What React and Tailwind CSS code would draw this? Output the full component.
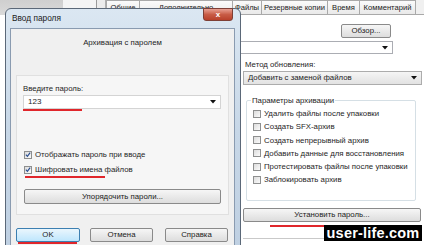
import React from "react";

const Check = ({ checked }) => (
  <span className="w-[8px] h-[8px] border border-[#8e8f8f] bg-gradient-to-br from-[#dcdcdc] to-[#fbfbfb] flex items-center justify-center shrink-0">
    {checked && (
      <svg width="7" height="7" viewBox="0 0 7 7">
        <path d="M1 3.6 L2.8 5.6 L6 1.2" fill="none" stroke="#2b4f8f" strokeWidth="1.4" />
      </svg>
    )}
  </span>
);

const Arrow = () => (
  <svg width="6" height="4" viewBox="0 0 6 4" className="shrink-0">
    <path d="M0 0 H6 L3 3.5 Z" fill="#111" />
  </svg>
);

const WinButton = ({ label, className = "", primary = false }) => (
  <div
    className={`h-[14px] rounded-[2px] border flex items-center justify-center text-[#222] ${
      primary
        ? "border-[#3c7fb1] bg-gradient-to-b from-[#eaf6fd] to-[#bee6fd]"
        : "border-[#8a8a8a] bg-gradient-to-b from-[#f6f6f6] to-[#dddddd]"
    } ${className}`}
  >
    {label}
  </div>
);

const tabs = [
  { label: "Общие", w: "w-[34px]" },
  { label: "Дополнительно", w: "w-[94px]" },
  { label: "Файлы", w: "w-[30px]" },
  { label: "Резервные копии", w: "w-[67px]" },
  { label: "Время", w: "w-[33px]" },
  { label: "Комментарий", w: "w-[57px]" },
];

const options = [
  "Удалить файлы после упаковки",
  "Создать SFX-архив",
  "Создать непрерывный архив",
  "Добавить данные для восстановления",
  "Протестировать файлы после упаковки",
  "Заблокировать архив",
];

const BackWindow = () => (
  <div className="flex flex-col h-full">
    {/* tab strip */}
    <div className="flex h-[15px] shrink-0">
      <div className="w-[63px] bg-gradient-to-b from-[#cfcfcf] to-[#dadada]" />
      <div className="w-[34px] bg-[#f4f4f4] border-r border-[#9a9a9a]" />
      <div className="w-[9px] bg-[#ececec] border-r border-[#b0b0b0]" />
      <div className="flex items-end bg-[#f0f0f0] border-b border-[#a9a9a9]">
        {tabs.map((t) => (
          <div
            key={t.label}
            className={`${t.w} h-[14px] border border-b-0 border-[#a9a9a9] bg-gradient-to-b from-[#fbfbfb] to-[#e9e9e9] flex items-center justify-center whitespace-nowrap overflow-hidden text-[7.6px] text-[#222] -ml-px first:ml-0`}
          >
            {t.label}
          </div>
        ))}
      </div>
      <div className="flex-1 bg-[#f0f0f0] border-b border-[#a9a9a9]" />
    </div>

    {/* tab page */}
    <div className="flex-1 bg-white pl-[243px] pr-[2px] flex flex-col text-[7.8px] text-[#1e1e1e]">
      <div className="flex justify-end pr-[31px] mt-[9px]">
        <WinButton label="Обзор..." className="w-[50px]" />
      </div>
      <div className="mt-[3px] ml-[-40px] mr-[29px] h-[13px] border border-[#abadb3] bg-white flex items-center justify-end pr-[4px]">
        <Arrow />
      </div>
      <div className="mt-[6px] ml-[2px] leading-[10px]">Метод обновления:</div>
      <div className="mt-[1px] h-[14px] border border-[#acacac] bg-gradient-to-b from-[#f5f5f5] to-[#e2e2e2] flex items-center justify-between pl-[4px] pr-[4px]">
        <span>Добавить с заменой файлов</span>
        <Arrow />
      </div>

      <div className="relative mt-[15px] ml-[3px] mr-[6px] h-[101px] border border-[#d5dfe5] rounded-[2px] pt-[8px] pl-[6px] flex flex-col gap-[4.3px]">
        <div className="absolute -top-[5px] left-[4px] bg-white px-[1px] leading-[9px]">
          Параметры архивации
        </div>
        {options.map((o) => (
          <div key={o} className="flex items-center gap-[3px] h-[9px] leading-[9px]">
            <Check />
            <span>{o}</span>
          </div>
        ))}
      </div>

      <WinButton label="Установить пароль..." className="mt-[7px] w-[178px]" />
      <div className="mt-[16px] h-px bg-[#c9c9c9]" />
    </div>
  </div>
);

const Dialog = () => (
  <div className="absolute left-[5px] top-[8px] w-[236px] h-[245px] rounded-t-[6px] border border-[#5b6878] bg-gradient-to-b from-[#dbe7f2] via-[#c7d7e7] to-[#bfd0e2] flex flex-col">
    {/* title bar */}
    <div className="relative h-[19px] shrink-0 flex items-center pl-[6px]">
      <span className="text-[8.3px] text-[#1a1a1a]">Ввод пароля</span>
      <div className="absolute right-[7px] -top-px w-[30px] h-[13px] rounded-b-[3px] border border-[#7d3f36] bg-gradient-to-b from-[#e8a093] via-[#c85c46] to-[#b8402a] flex items-center justify-center">
        <span className="text-white text-[8px] font-bold leading-none">x</span>
      </div>
    </div>

    {/* client area */}
    <div className="ml-[4px] mr-[5px] flex-1 border border-[#8a9bb0] bg-[#f0f0f0] flex flex-col text-[7.8px] text-[#1e1e1e]">
      <div className="h-[46px] shrink-0 flex justify-center pt-[9px] leading-[10px]">
        Архивация с паролем
      </div>

      <div className="mx-[5px] h-[140px] border border-[#e0e0e0] bg-[#f6f6f6] flex flex-col pl-[6px] pr-[7px]">
        <div className="mt-[8px] leading-[10px]">Введите пароль:</div>
        <div className="mt-[1px] h-[14px] border border-[#d4d4d4] bg-white flex items-center justify-between pl-[4px] pr-[4px]">
          <span className="text-[8px]">123</span>
          <Arrow />
        </div>
        <div className="mt-[41px] flex items-center gap-[3px] h-[9px] ml-px">
          <Check checked />
          <span>Отображать пароль при вводе</span>
        </div>
        <div className="mt-[6px] flex items-center gap-[3px] h-[9px] ml-px">
          <Check checked />
          <span>Шифровать имена файлов</span>
        </div>
        <WinButton label="Упорядочить пароли..." className="mt-[15px] ml-px h-[15px]" />
      </div>

      <div className="mt-[13px] flex px-[5px] gap-[10px]">
        <WinButton label="OK" primary className="w-[64px]" />
        <WinButton label="Отмена" className="w-[63px]" />
        <WinButton label="Справка" className="w-[63px] ml-[2px]" />
      </div>
    </div>
  </div>
);

export default function App() {
  return (
    <div className="relative w-[424px] h-[245px] overflow-hidden bg-[#e6e6e6] font-['Liberation_Sans',Arial,sans-serif]">
      <BackWindow />
      <Dialog />

      {/* red annotation lines */}
      <div className="absolute left-[23px] top-[109px] w-[59px] h-[1.5px] bg-[#e0262b]" />
      <div className="absolute left-[25px] top-[176px] w-[80px] h-[1.5px] bg-[#e0262b]" />
      <div className="absolute left-[18px] top-[242px] w-[59px] h-[2px] bg-[#e0262b]" />
      <div className="absolute left-[270px] top-[225px] w-[56px] h-[1.5px] bg-[#e0262b]" />

      {/* watermark */}
      <div className="absolute left-[324px] top-[225px] w-[98px] h-[16px] bg-black flex items-center justify-center">
        <span className="text-white font-bold text-[14.5px] leading-none tracking-[0.2px]">
          user-life.com
        </span>
      </div>
    </div>
  );
}
